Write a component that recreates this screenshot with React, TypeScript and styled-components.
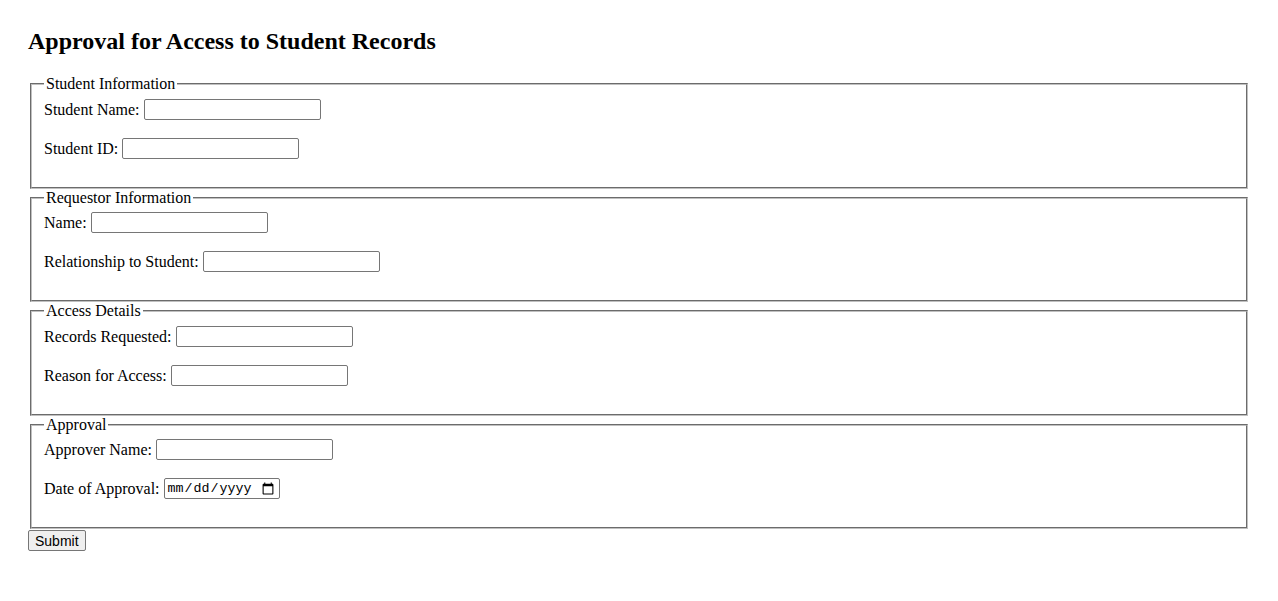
import React from 'react';
import styled, { createGlobalStyle } from 'styled-components';

const GlobalStyle = createGlobalStyle`
    html, body {
        margin: 0;
        padding: 0;
        background: #ffffff;
    }
    body {
        font-family: "Liberation Serif", "Times New Roman", serif;
        font-size: 16px;
        color: #000000;
    }
`;

const Page = styled.div`
    padding: 28px;
`;

const Title = styled.h2`
    font-size: 24px;
    font-weight: 700;
    margin: 0 0 19.92px;
    line-height: normal;
`;

const Form = styled.form`
    display: block;
`;

const Section = styled.fieldset`
    margin: 0 2px;
    padding: 5.6px 12px 10px;
    border: 2px groove rgb(192, 192, 192);
    min-inline-size: min-content;
`;

const Legend = styled.legend`
    padding: 0 2px;
    font-size: 16px;
`;

const Row = styled.div`
    display: flex;
    align-items: center;
    gap: 4px;
    height: 21px;
    margin-bottom: 18px;
`;

const Label = styled.label`
    font-size: 16px;
    white-space: nowrap;
    padding-top: 1px;
`;

const TextInput = styled.input`
    box-sizing: border-box;
    width: ${p => p.type === 'date' ? 116 : 177}px;
    height: 21px;
    padding: 1px 2px;
    border: 1px solid #767676;
    border-radius: 2px;
    font-family: ${p => p.type === 'date'
        ? '"Liberation Mono", "Courier New", monospace'
        : '"Liberation Sans", Arial, sans-serif'};
    font-size: 13.33px;
    background: #ffffff;
    color: #000000;
`;

const SubmitButton = styled.button`
    box-sizing: border-box;
    display: block;
    margin-top: 1px;
    height: 21px;
    padding: 1px 6px;
    border: 1px solid #767676;
    border-radius: 2px;
    background: #efefef;
    font-family: "Liberation Sans", Arial, sans-serif;
    font-size: 14px;
    color: #000000;
`;

type Field = { id: string; label: string; type?: string };

const sections: { title: string; fields: Field[] }[] = [
    {
        title: 'Student Information',
        fields: [
            { id: 'studentName', label: 'Student Name:' },
            { id: 'studentId', label: 'Student ID:' },
        ],
    },
    {
        title: 'Requestor Information',
        fields: [
            { id: 'requestorName', label: 'Name:' },
            { id: 'relationship', label: 'Relationship to Student:' },
        ],
    },
    {
        title: 'Access Details',
        fields: [
            { id: 'records', label: 'Records Requested:' },
            { id: 'reason', label: 'Reason for Access:' },
        ],
    },
    {
        title: 'Approval',
        fields: [
            { id: 'approverName', label: 'Approver Name:' },
            { id: 'approvalDate', label: 'Date of Approval:', type: 'date' },
        ],
    },
];

const App = () => {
    return (
        <Page>
            <GlobalStyle />
            <Title>Approval for Access to Student Records</Title>
            <Form onSubmit={e => e.preventDefault()}>
                {sections.map(section => (
                    <Section key={section.title}>
                        <Legend>{section.title}</Legend>
                        {section.fields.map(field => (
                            <Row key={field.id}>
                                <Label htmlFor={field.id}>{field.label}</Label>
                                <TextInput id={field.id} name={field.id} type={field.type || 'text'} />
                            </Row>
                        ))}
                    </Section>
                ))}
                <SubmitButton type="submit">Submit</SubmitButton>
            </Form>
        </Page>
    );
};

export default App;
